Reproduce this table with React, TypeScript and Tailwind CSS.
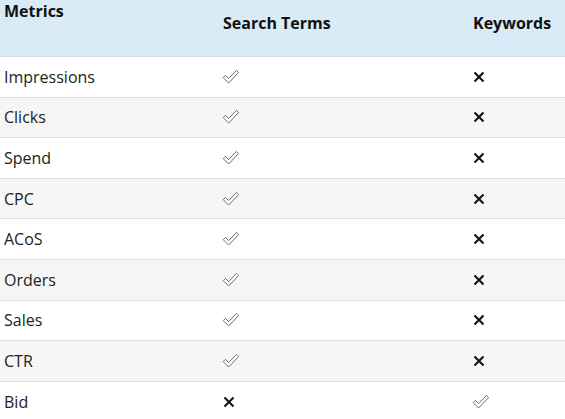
const rows: { name: string; search: boolean; keywords: boolean }[] = [
  { name: "Impressions", search: true, keywords: false },
  { name: "Clicks", search: true, keywords: false },
  { name: "Spend", search: true, keywords: false },
  { name: "CPC", search: true, keywords: false },
  { name: "ACoS", search: true, keywords: false },
  { name: "Orders", search: true, keywords: false },
  { name: "Sales", search: true, keywords: false },
  { name: "CTR", search: true, keywords: false },
  { name: "Bid", search: false, keywords: true },
];

function Check() {
  return (
    <svg width="18" height="16" viewBox="0 0 18 16" className="block">
      <path
        d="M1.2 8.6 L3.4 6.4 L6.6 9.6 L14.4 1.4 L16.6 3.6 L6.6 14 Z"
        fill="white"
        stroke="#6b6b6b"
        strokeWidth="1"
        strokeLinejoin="round"
      />
    </svg>
  );
}

function Cross() {
  return (
    <svg width="12" height="12" viewBox="0 0 12 12" className="block">
      <path d="M1.5 1.5 L10.5 10.5 M10.5 1.5 L1.5 10.5" stroke="#111" strokeWidth="2.1" />
    </svg>
  );
}

export default function App() {
  return (
    <div className="w-[565px] h-[419px] overflow-hidden bg-white font-['Open_Sans',sans-serif] text-[16px] text-[#222]">
      <div className="grid grid-cols-[219px_250px_1fr] h-[57px] bg-[#d9ebf6] border-b border-[#dcdcdc] font-bold text-[#111]">
        <div className="pl-1 leading-[22px]">Metrics</div>
        <div className="pl-1 pt-[11px]">Search Terms</div>
        <div className="pl-1 pt-[11px]">Keywords</div>
      </div>
      {rows.map((r, i) => (
        <div
          key={r.name}
          className={`grid grid-cols-[219px_250px_1fr] items-center h-[40.6px] border-b border-[#dedede] ${
            i % 2 === 1 ? "bg-[#f6f6f6]" : "bg-white"
          }`}
        >
          <div className="pl-1">{r.name}</div>
          <div className="pl-[3px]">{r.search ? <Check /> : <div className="pl-[1px]"><Cross /></div>}</div>
          <div className="pl-1">{r.keywords ? <div className="-ml-[1px]"><Check /></div> : <Cross />}</div>
        </div>
      ))}
    </div>
  );
}
